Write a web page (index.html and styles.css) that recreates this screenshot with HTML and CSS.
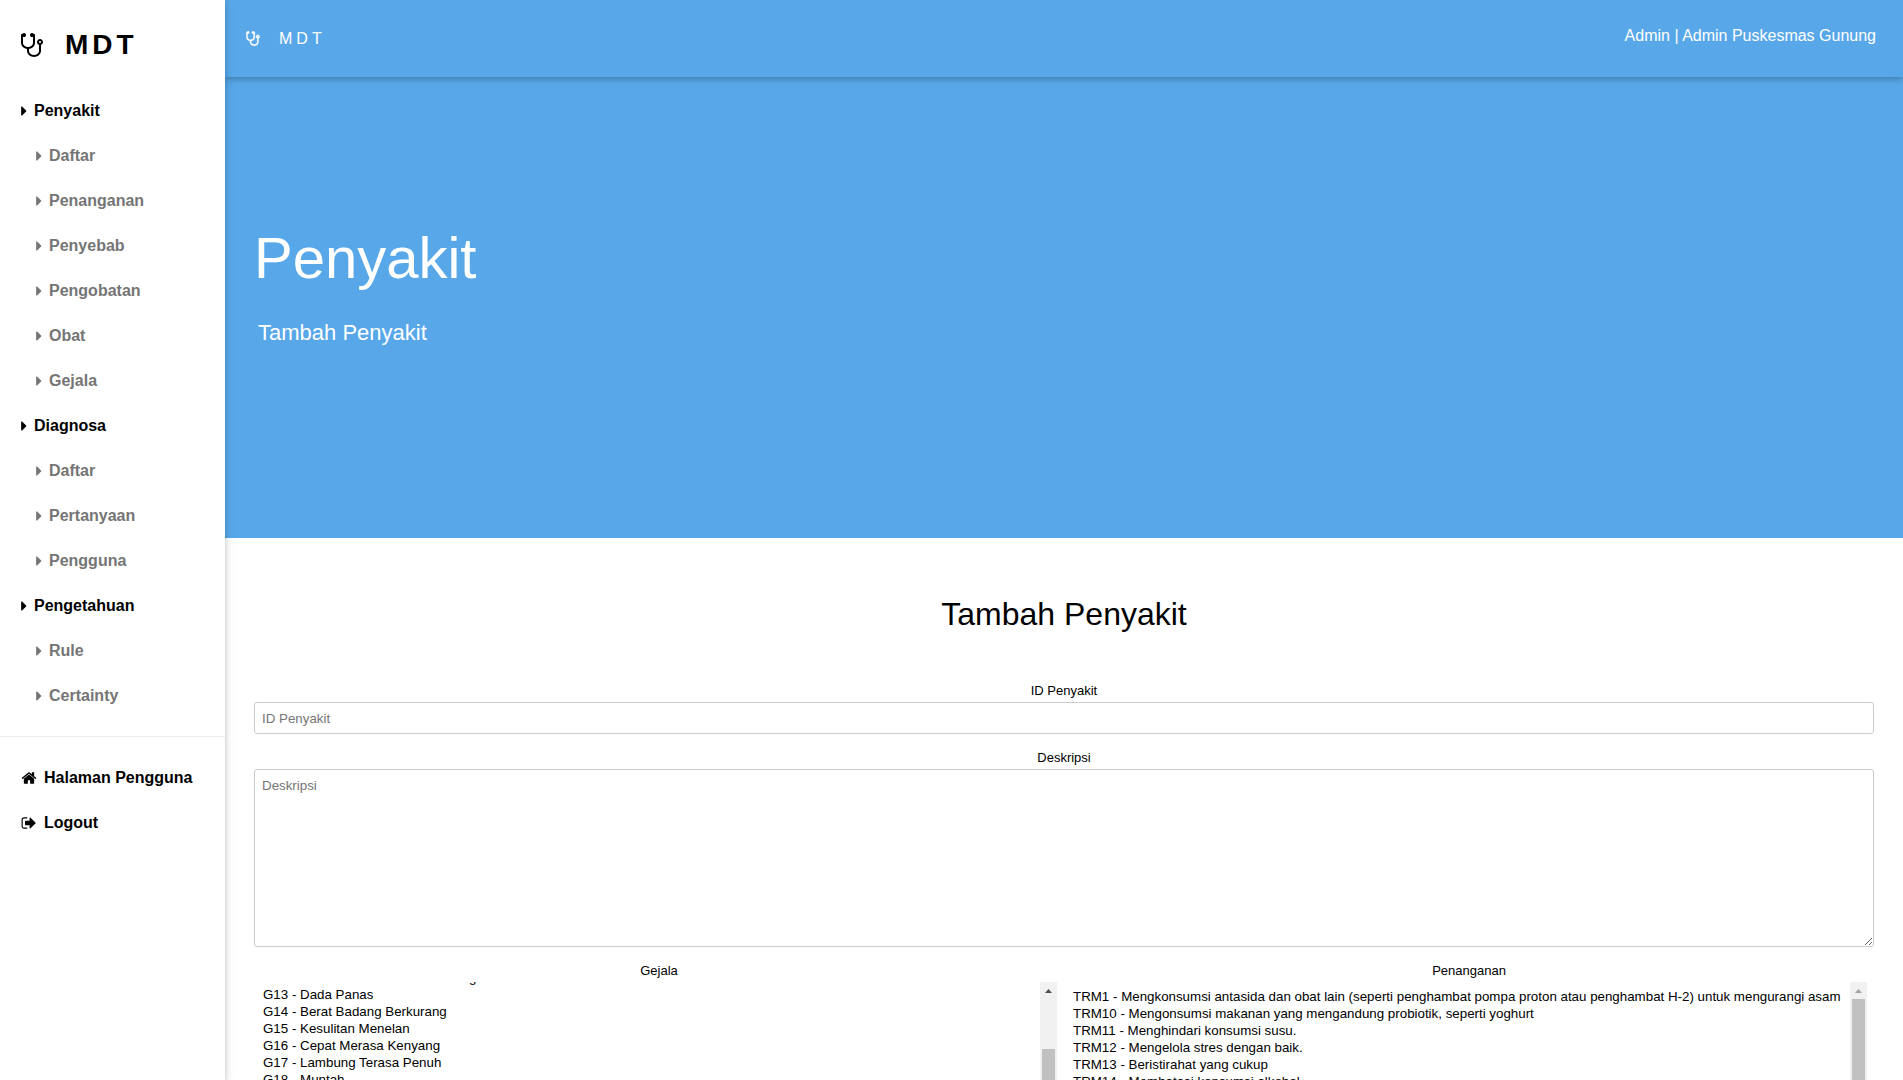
FILE: index.html
```html
<!DOCTYPE html>
<html lang="id">
<head>
<meta charset="utf-8">
<title>MDT - Tambah Penyakit</title>
<link rel="stylesheet" href="styles.css">
</head>
<body>
<svg class="sprite" aria-hidden="true">
  <symbol id="stethoscope" viewBox="192 0 1408 1792"><path d="M1472 704q0-26-19-45t-45-19-45 19-19 45 19 45 45 19 45-19 19-45zm128 0q0 62-35.500 111t-92.500 70v395q0 159-131.500 271.500t-316.500 112.500-316.500-112.500-131.500-271.500v-132q-164-20-274-128t-110-252v-512q0-26 19-45t45-19q6 0 16 2 17-30 47-48t65-18q53 0 90.500 37.500t37.500 90.500-37.500 90.500-90.500 37.500q-33 0-64-18v402q0 106 94 181t226 75 226-75 94-181v-402q-31 18-64 18-53 0-90.500-37.500t-37.500-90.500 37.500-90.500 90.500-37.500q35 0 65 18t47 48q10-2 16-2 26 0 45 19t19 45v512q0 144-110 252t-274 128v132q0 106 94 181t226 75 226-75 94-181v-395q-57-21-92.500-70t-35.500-111q0-80 56-136t136-56 136 56 56 136z"/></symbol>
  <symbol id="caret" viewBox="576 0 640 1792"><path d="M1152 896q0 26-19 45l-448 448q-19 19-45 19t-45-19-19-45v-896q0-26 19-45t45-19 45 19l448 448q19 19 19 45z"/></symbol>
  <symbol id="home" viewBox="64 0 1664 1792"><path d="M1472 992v480q0 26-19 45t-45 19h-384v-384h-256v384h-384q-26 0-45-19t-19-45v-480q0-1 .5-3t.5-3l575-474 575 474q1 2 1 6zm223-69l-62 74q-8 9-21 11h-3q-13 0-21-7l-692-577-692 577q-12 8-24 7-13-2-21-11l-62-74q-8-10-7-23.500t11-21.500l719-599q32-26 76-26t76 26l244 204v-195q0-14 9-23t23-9h192q14 0 23 9t9 23v408l219 182q10 8 11 21.500t-7 23.500z"/></symbol>
  <symbol id="signout" viewBox="64 0 1664 1792"><path d="M704 1440q0 4 1 20t.5 26.500-3 23.500-10 19.500-20.500 6.500h-320q-119 0-203.500-84.500t-84.500-203.500v-704q0-119 84.500-203.500t203.500-84.500h320q13 0 22.500 9.500t9.500 22.500q0 4 1 20t.5 26.500-3 23.500-10 19.500-20.500 6.500h-320q-66 0-113 47t-47 113v704q0 66 47 113t113 47h312l11.500 1 11.500 3 8 5.500 7 9 2 13.500zm928-544q0 26-19 45l-544 544q-19 19-45 19t-45-19-19-45v-288h-448q-26 0-45-19t-19-45v-384q0-26 19-45t45-19h448v-288q0-26 19-45t45-19 45 19l544 544q19 19 19 45z"/></symbol>
  <symbol id="arrow" viewBox="0 0 17 17"><path d="M5 11h7L8.500 7z"/></symbol>
</svg>
<div class="layout">
  <nav class="sidebar">
    <a class="logo" href="#"><svg class="logo-icon"><use href="#stethoscope"/></svg><b>MDT</b></a>
    <div class="menu">
      <a href="#"><svg class="caret"><use href="#caret"/></svg>Penyakit</a>
      <a class="sub" href="#"><svg class="caret"><use href="#caret"/></svg>Daftar</a>
      <a class="sub" href="#"><svg class="caret"><use href="#caret"/></svg>Penanganan</a>
      <a class="sub" href="#"><svg class="caret"><use href="#caret"/></svg>Penyebab</a>
      <a class="sub" href="#"><svg class="caret"><use href="#caret"/></svg>Pengobatan</a>
      <a class="sub" href="#"><svg class="caret"><use href="#caret"/></svg>Obat</a>
      <a class="sub" href="#"><svg class="caret"><use href="#caret"/></svg>Gejala</a>
      <a href="#"><svg class="caret"><use href="#caret"/></svg>Diagnosa</a>
      <a class="sub" href="#"><svg class="caret"><use href="#caret"/></svg>Daftar</a>
      <a class="sub" href="#"><svg class="caret"><use href="#caret"/></svg>Pertanyaan</a>
      <a class="sub" href="#"><svg class="caret"><use href="#caret"/></svg>Pengguna</a>
      <a href="#"><svg class="caret"><use href="#caret"/></svg>Pengetahuan</a>
      <a class="sub" href="#"><svg class="caret"><use href="#caret"/></svg>Rule</a>
      <a class="sub" href="#"><svg class="caret"><use href="#caret"/></svg>Certainty</a>
    </div>
    <div class="menu account">
      <a href="#"><svg class="glyph"><use href="#home"/></svg>Halaman Pengguna</a>
      <a href="#"><svg class="glyph"><use href="#signout"/></svg>Logout</a>
    </div>
  </nav>
  <div class="page">
    <header class="topbar">
      <a class="brand" href="#"><svg class="brand-icon"><use href="#stethoscope"/></svg>MDT</a>
      <span class="user">Admin | Admin Puskesmas Gunung</span>
    </header>
    <section class="hero">
      <h1>Penyakit</h1>
      <p>Tambah Penyakit</p>
    </section>
    <main>
      <h2>Tambah Penyakit</h2>
      <form>
        <div class="field">
          <label for="id">ID Penyakit</label>
          <input id="id" type="text" placeholder="ID Penyakit">
        </div>
        <div class="field">
          <label for="desc">Deskripsi</label>
          <textarea id="desc" placeholder="Deskripsi"></textarea>
        </div>
        <div class="columns">
          <div class="field">
            <label for="gejala">Gejala</label>
            <div class="listbox">
              <select id="gejala" multiple>
                <option>G1 - Mual</option>
                <option>G2 - Perut Kembung</option>
                <option>G3 - Nyeri Ulu Hati</option>
                <option>G4 - Sering Bersendawa</option>
                <option>G5 - Demam</option>
                <option>G6 - Diare</option>
                <option>G7 - Sembelit</option>
                <option>G8 - Sakit Kepala</option>
                <option>G9 - Lemas</option>
                <option>G10 - Mulut Terasa Pahit</option>
                <option>G11 - Kram Perut</option>
                <option>G12 - Nafsu Makan Jauh Berkurang</option>
                <option>G13 - Dada Panas</option>
                <option>G14 - Berat Badang Berkurang</option>
                <option>G15 - Kesulitan Menelan</option>
                <option>G16 - Cepat Merasa Kenyang</option>
                <option>G17 - Lambung Terasa Penuh</option>
                <option>G18 - Muntah</option>
                <option>G19 - Batuk Kering</option>
                <option>G20 - Sesak Napas</option>
                <option>G21 - Suara Serak</option>
                <option>G22 - Nyeri Dada</option>
                <option>G23 - Bau Mulut</option>
                <option>G24 - Sulit Tidur</option>
                <option>G25 - Pusing</option>
                <option>G26 - Dehidrasi</option>
                <option>G27 - Muntah Darah</option>
                <option>G28 - Wajah Pucat</option>
                <option>G29 - Keringat Dingin</option>
                <option>G30 - Cegukan</option>
              </select>
              <div class="scrollbar scrolled" aria-hidden="true"><svg class="arrow"><use href="#arrow"/></svg><div class="thumb"></div></div>
            </div>
          </div>
          <div class="field">
            <label for="penanganan">Penanganan</label>
            <div class="listbox">
              <select id="penanganan" multiple>
                <option>TRM1 - Mengkonsumsi antasida dan obat lain (seperti penghambat pompa proton atau penghambat H-2) untuk mengurangi asam</option>
                <option>TRM10 - Mengonsumsi makanan yang mengandung probiotik, seperti yoghurt</option>
                <option>TRM11 - Menghindari konsumsi susu.</option>
                <option>TRM12 - Mengelola stres dengan baik.</option>
                <option>TRM13 - Beristirahat yang cukup</option>
                <option>TRM14 - Membatasi konsumsi alkohol.</option>
                <option>TRM15 - Berhenti merokok</option>
                <option>TRM16 - Minum air putih yang cukup</option>
                <option>TRM2 - Makan dalam porsi kecil</option>
                <option>TRM3 - Menghindari makanan pedas</option>
              </select>
              <div class="scrollbar" aria-hidden="true"><svg class="arrow"><use href="#arrow"/></svg><div class="thumb"></div></div>
            </div>
          </div>
        </div>
      </form>
    </main>
  </div>
</div>
<script>
  // Open the symptom list part-way down
  document.getElementById('gejala').scrollTop = 206;
</script>
</body>
</html>
```
FILE: styles.css
```css
* { box-sizing: border-box; }
body { margin: 0; background: #fff; color: #000; font: 16px/24px "Liberation Sans", Arial, sans-serif; }
a { color: inherit; text-decoration: none; }
svg { fill: currentColor; flex: none; }
.sprite { position: absolute; width: 0; height: 0; }
.layout { display: flex; align-items: flex-start; }

.sidebar { position: sticky; top: 0; z-index: 2; flex: none; width: 225px; height: 100vh; background: #fff; box-shadow: 0 2px 5px rgba(0, 0, 0, .16), 0 2px 10px rgba(0, 0, 0, .12); }
.logo { display: flex; align-items: center; gap: 22px; height: 88px; padding: 2px 0 0 21px; font-size: 28px; letter-spacing: 4px; }
.logo-icon { width: 22px; height: 28px; }
.menu { display: flex; flex-direction: column; padding-bottom: 18px; font-weight: bold; }
.menu a { display: flex; align-items: center; gap: 7px; height: 45px; padding-left: 21px; }
.menu .sub { padding-left: 36px; color: #757575; }
.caret { width: 6px; height: 16px; }
.glyph { width: 16px; height: 16px; }
.account { padding-top: 18px; border-top: 1px solid #eee; }

.page { flex: 1; min-width: 0; }
.topbar { position: relative; display: flex; justify-content: space-between; align-items: flex-start; padding: 26px 27px 26px 21px; background: #58a8e9; color: #fff; box-shadow: 0 2px 5px rgba(0, 0, 0, .16), 0 2px 10px rgba(0, 0, 0, .12); }
.brand { display: flex; align-items: center; gap: 19px; line-height: 25px; letter-spacing: 4px; }
.brand-icon { width: 14px; height: 17px; stroke: currentColor; stroke-width: 40px; }
.user { line-height: 20px; }
.hero { padding: 137px 29px 189px; background: #58a8e9; color: #fff; }
.hero h1 { margin: 0; font-size: 58px; line-height: 88px; font-weight: normal; }
.hero p { margin: 15px 0 0; padding-left: 4px; font-size: 22px; line-height: 32px; }

main { padding: 52px 29px 32px; }
h2 { margin: 0 0 42px; font-size: 32px; line-height: 48px; font-weight: normal; text-align: center; }
form { display: flex; flex-direction: column; gap: 13px; }
.field { display: flex; flex-direction: column; }
label { font-size: 13px; line-height: 22px; text-align: center; }
input, textarea { width: 100%; border: 1px solid #ccc; border-radius: 3px; padding: 8px 7px; font-family: inherit; background: #fff; }
input { height: 32px; }
textarea { display: block; height: 178px; }
::placeholder { color: #757575; }
.columns { display: grid; grid-template-columns: 1fr 1fr; }
.columns .field { min-width: 0; }

.listbox { display: flex; height: 160px; margin: 0 7px; }
select { flex: 1; min-width: 0; height: 100%; padding: 7px 0; border: 0; border-radius: 0; background: #fff; font-family: inherit; color: #000; outline: 0; scrollbar-width: none; }
option { height: 17px; min-height: 17px; padding: 0 2px 1px; }
.scrollbar { flex: none; width: 17px; padding: 0 2px; background: #f1f1f1; color: #a3a3a3; }
.arrow { display: block; width: 17px; height: 17px; margin-left: -2px; }
.thumb { height: 110px; background: #c1c1c1; }
.scrolled { color: #505050; }
.scrolled .thumb { height: 38px; margin-top: 50px; }
```
